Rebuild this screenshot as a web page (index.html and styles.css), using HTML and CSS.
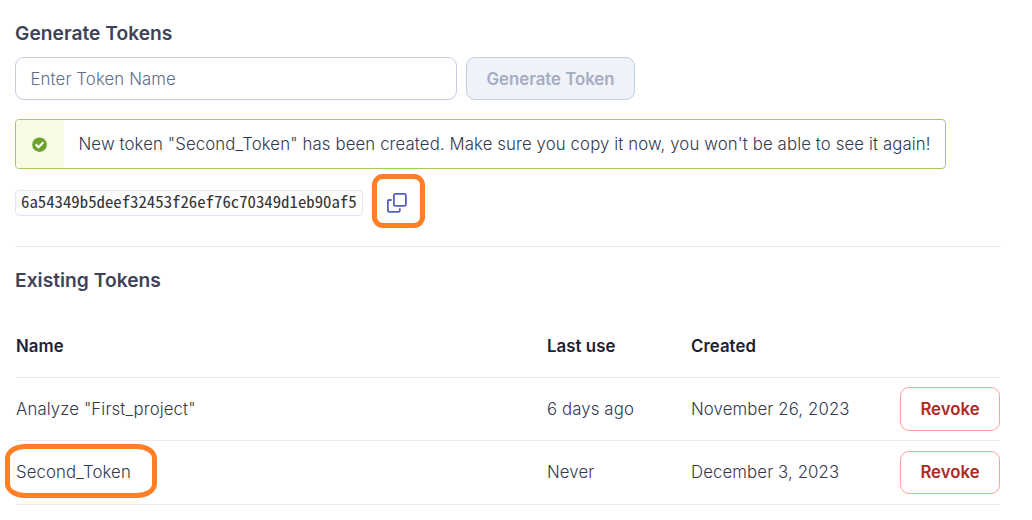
FILE: index.html
```html
<!DOCTYPE html>
<html lang="en">
<head>
<meta charset="utf-8">
<title>Tokens</title>
<link rel="stylesheet" href="styles.css">
</head>
<body>
<main class="page">
  <h2 class="heading">Generate Tokens</h2>
  <form class="generate">
    <input class="token-input" type="text" placeholder="Enter Token Name">
    <button class="button generate-button" type="button" disabled>Generate Token</button>
  </form>
  <div class="alert">
    <div class="alert-icon">
      <svg width="16" height="16" viewBox="0 0 16 16"><circle cx="7.500" cy="7.700" r="7.300" fill="#6ca12f"/><path d="M3.700 7.400l2.800 2.800 4.900-4.900" fill="none" stroke="#fff" stroke-width="2.200"/></svg>
    </div>
    <p class="alert-text">New token "Second_Token" has been created. Make sure you copy it now, you won't be able to see it again!</p>
  </div>
  <div class="secret">
    <code class="code">6a54349b5deef32453f26ef76c70349d1eb90af5</code>
    <button class="copy" type="button" aria-label="Copy">
      <svg width="20" height="20" viewBox="0 0 20 20" fill="none" stroke="#5560bd" stroke-width="1.8"><rect x="6.900" y="0.900" width="12" height="12" rx="1.500"/><path d="M4.600 7H2.200Q.9 7 .9 8.300V17.500Q.9 18.900 2.300 18.900H11.400Q12.800 18.900 12.800 17.500V15.200"/></svg>
    </button>
  </div>
  <h2 class="heading existing">Existing Tokens</h2>
  <table class="tokens">
    <colgroup><col class="col-name"><col class="col-use"><col class="col-created"><col></colgroup>
    <thead><tr><th>Name</th><th>Last use</th><th>Created</th><th></th></tr></thead>
    <tbody>
      <tr><td>Analyze "First_project"</td><td>6 days ago</td><td>November 26, 2023</td><td class="action"><button class="button revoke" type="button">Revoke</button></td></tr>
      <tr class="last"><td><span class="marked">Second_Token</span></td><td>Never</td><td>December 3, 2023</td><td class="action"><button class="button revoke" type="button">Revoke</button></td></tr>
    </tbody>
  </table>
</main>
</body>
</html>
```
FILE: styles.css
```css
*, *::after { box-sizing: border-box; }
body {
  margin: 0;
  background: #fff;
  color: #34394e;
  font: 300 16.8px/24px Inter, sans-serif;
}
.page { width: 1001px; min-height: 520px; padding: 19px 0 0 15px; }
.heading {
  margin: 0;
  color: #3e4357;
  font-size: 19.2px;
  font-weight: 600;
  letter-spacing: 0.03px;
  line-height: 29px;
}
.generate { display: flex; gap: 9px; margin-top: 9px; }
.token-input {
  width: 442px;
  height: 43px;
  padding: 0 14.5px;
  border: 1px solid #c5cde0;
  border-radius: 9px;
  font: inherit;
  letter-spacing: 0.11px;
}
.token-input::placeholder { color: #616d89; opacity: 1; }
.button {
  border-radius: 9px;
  padding: 0;
  font: 600 16.8px/24px Inter, sans-serif;
}
.generate-button {
  width: 169px;
  height: 43px;
  border: 1px solid #c5cde0;
  background: #eff2f9;
  color: #a6adc2;
}
.alert {
  display: flex;
  width: 931px;
  height: 50px;
  margin-top: 19px;
  border: 1px solid #a6ca55;
  border-radius: 4px;
  overflow: hidden;
}
.alert-icon {
  display: grid;
  place-items: center;
  width: 48px;
  padding-top: 1px;
  background: #f7fbe6;
}
.alert-icon svg { display: block; }
.alert-text {
  margin: 0;
  padding: 12px 0 0 14.5px;
  letter-spacing: 0.11px;
  white-space: nowrap;
}
.secret {
  display: flex;
  align-items: center;
  gap: 9px;
  height: 78px;
  padding-bottom: 10px;
  border-bottom: 1px solid #e1e6f3;
}
.code {
  width: 348px;
  height: 26px;
  padding: 0 5px;
  border: 1px solid #e1e6f3;
  border-radius: 4px;
  background: #fcfcfd;
  color: #333;
  font: 16.8px/20px "Noto Sans Mono CJK SC", "DejaVu Sans Mono", monospace;
  white-space: nowrap;
}
.copy {
  display: grid;
  place-items: center;
  width: 53px;
  height: 54px;
  margin-top: -4px;
  padding: 4px 0 0;
  border: 5px solid #ff7f27;
  border-radius: 11px;
  background: #fff;
}
.copy svg { margin-left: -4px; }
.existing { margin-top: 19px; }
.tokens {
  width: 984px;
  margin: 20px 0 0 1px;
  border-spacing: 0;
  table-layout: fixed;
}
.col-name { width: 531px; }
.col-use { width: 144px; }
.col-created { width: 158px; }
.tokens th, .tokens td {
  height: 63px;
  padding: 0;
  border-bottom: 1px solid #ebebeb;
  text-align: left;
  vertical-align: middle;
  white-space: nowrap;
}
.tokens td { letter-spacing: 0.11px; }
.tokens .last td { height: 64px; padding-bottom: 1px; }
.tokens th { color: #1e2132; font-weight: 600; letter-spacing: 0.06px; }
.tokens .action { text-align: right; line-height: 0; }
.revoke {
  width: 100px;
  height: 44px;
  border: 1px solid #fba59b;
  background: #fff;
  color: #ae2a25;
}
.last .revoke { height: 43px; }
.marked { position: relative; }
.marked::after {
  content: "";
  position: absolute;
  left: -11px;
  top: -18px;
  width: 152px;
  height: 54px;
  border: 5px solid #ff7f27;
  border-radius: 20px / 14px;
}
```
